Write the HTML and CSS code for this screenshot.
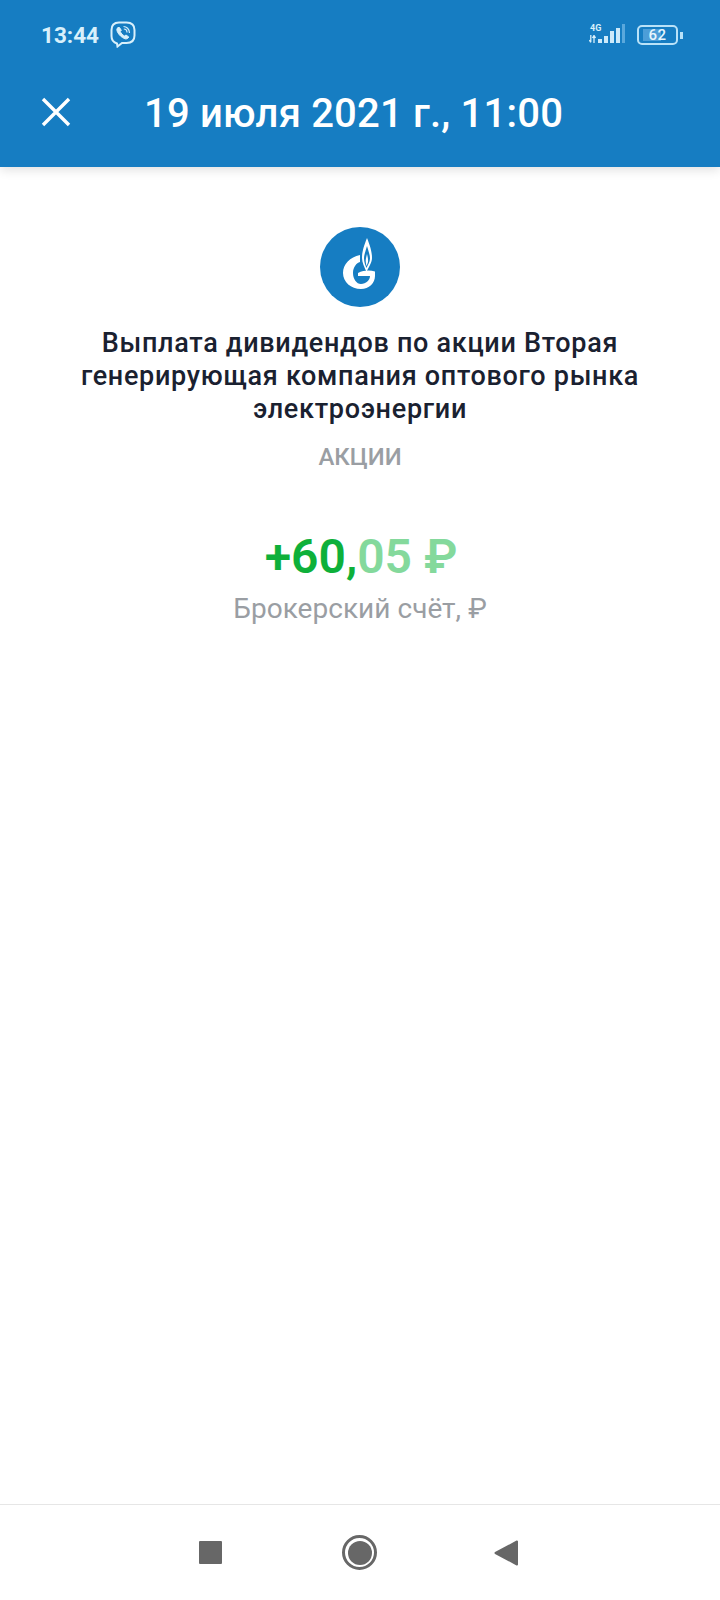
FILE: index.html
```html
<!DOCTYPE html>
<html>
  <head>
    <title>Операция</title>
    <link rel="stylesheet" href="styles.css">
  </head>
  <body>
    <header class="header">
      <div class="status-bar">
        <div class="status-left">
          <span class="time">13:44</span>
          <svg class="viber" width="26" height="27" viewBox="0 0 26 27" fill="none" stroke="#d8f0fb" stroke-width="2">
            <path d="M7 22.500C3.500 21.500 1.500 19.500 1.500 15V9C1.500 4 4.500 1.500 9 1.500H16.500C21.500 1.500 24.500 4 24.500 9V14.500C24.500 19.500 21.500 22 16.500 22H12L7.500 25.500Z"/>
            <path d="M8 6.500C6.500 7.500 6.500 9 7.500 11C9 14 11.500 16.500 15 17.800C16.500 18.300 18 17.500 18.800 16L16 14L14.500 15C12.500 14 11 12.300 10.300 10.500L11.300 9.300L9.500 6.500Z" fill="#d8f0fb" stroke-width="1"/>
            <path d="M13.500 5.500C16.500 5.500 19.500 8 19.500 12M13.800 8C15.500 8 17 9.500 17 11.500" stroke-width="1.200"/>
          </svg>
        </div>
        <div class="status-right">
          <div class="network">
            <span class="net-label">4G</span>
            <svg class="net-arrows" width="7" height="8" viewBox="0 0 7 8" fill="none" stroke="#d8f0fb" stroke-width="1.300">
              <path d="M1.800 0V7M0.300 5L1.800 7.500M5 8V1M3.500 3L5 0.500L6.500 3"/>
            </svg>
            <div class="bars">
              <span class="bar bar-1"></span>
              <span class="bar bar-2"></span>
              <span class="bar bar-3"></span>
              <span class="bar bar-4"></span>
              <span class="bar bar-5"></span>
            </div>
          </div>
          <div class="battery">
            <div class="battery-body">
              <span class="battery-fill"></span>
              <span class="battery-level">62</span>
            </div>
            <span class="battery-cap"></span>
          </div>
        </div>
      </div>
      <div class="toolbar">
        <svg class="close" width="30" height="30" viewBox="0 0 30 30" stroke="#fff" stroke-width="3.400">
          <path d="M2 2L28 28M28 2L2 28"/>
        </svg>
        <h1 class="title">19 июля 2021 г., 11:00</h1>
      </div>
    </header>

    <main class="content">
      <svg class="logo" width="80" height="80" viewBox="0 0 80 80">
        <circle cx="40" cy="40" r="40" fill="#167dc2"/>
        <path d="M47 11C43.500 20 42 25 42 31C42 36 44.500 40 46.500 45C48.500 40 52 36 52 31C52 25 50.500 20 47 11Z" fill="#fff"/>
        <path d="M47 19C45.300 25 44 28 44 31.500C44 35 45.300 38 46.500 41C47.700 38 50 35 50 31.500C50 28 48.700 25 47 19Z" fill="#167dc2"/>
        <path d="M47 27C46 31 45.500 33 45.800 35C46 37 46.300 38 46.600 39C47 38 47.500 36.500 48 35C48.300 33 48 31 47 27Z" fill="#fff"/>
        <path d="M40 28C30 30 23 37 23 46C23 55 31 62 41 62C49 62 55 56 55 49V44.500C50 43 44 43 38 46L38 49H50C50 53 46 57 41 57C36.500 57 33 52 33 46C33 40 36.500 36 40 35Z" fill="#fff"/>
      </svg>
      <h2 class="operation">Выплата дивидендов по акции Вторая генерирующая компания оптового рынка электроэнергии</h2>
      <p class="category">АКЦИИ</p>
      <p class="amount">+60,<span class="amount-light">05 ₽</span></p>
      <p class="account">Брокерский счёт, ₽</p>
    </main>

    <nav class="nav-bar">
      <span class="nav-square"></span>
      <span class="nav-home"><span class="nav-home-dot"></span></span>
      <svg width="24" height="26" viewBox="0 0 24 26" fill="#676767" stroke="#676767" stroke-width="2" stroke-linejoin="round">
        <path d="M23 1.500V24.500L1.500 13Z"/>
      </svg>
    </nav>
  </body>
</html>
```

FILE: styles.css
```css
* {
  box-sizing: border-box;
}

html,
body {
  height: 100%;
}

body {
  margin: 0;
  display: flex;
  flex-direction: column;
  font-family: Roboto, "Liberation Sans", sans-serif;
  background-color: #fff;
}

h1,
h2,
p {
  margin: 0;
}

.header {
  height: 167px;
  padding: 0 37px 0 41px;
  background-color: #167dc2;
  box-shadow: 0 3px 10px rgba(0, 0, 0, 0.12);
}

.status-bar {
  height: 70px;
  padding-top: 19px;
  display: flex;
  justify-content: space-between;
}

.status-left {
  display: flex;
  align-items: flex-start;
  gap: 11px;
}

.time {
  font-size: 22.5px;
  line-height: 32px;
  font-weight: 700;
  color: #d8f0fb;
}

.viber {
  margin-top: 2px;
}

.status-right {
  display: flex;
  gap: 12px;
}

.network {
  display: grid;
  grid-template-columns: 9px auto;
  grid-template-rows: 10px 9px;
  width: 36px;
  margin-top: 5px;
}

.net-label {
  grid-column: 1 / 3;
  grid-row: 1;
  margin-left: 1px;
  font-size: 9px;
  line-height: 9px;
  font-weight: 700;
  color: #d8f0fb;
}

.net-arrows {
  grid-column: 1;
  grid-row: 2;
  align-self: end;
}

.bars {
  grid-column: 2;
  grid-row: 1 / 3;
  display: flex;
  align-items: flex-end;
  gap: 2px;
}

.bar {
  width: 4px;
  background-color: #cdeafa;
}

.bar-1 {
  height: 4px;
}

.bar-2 {
  height: 7px;
}

.bar-3 {
  height: 12px;
}

.bar-4 {
  height: 15px;
}

.bar-5 {
  height: 19px;
  width: 3px;
  background-color: #5aa8dc;
}

.battery {
  display: flex;
  align-items: center;
  height: 20px;
  margin-top: 6px;
}

.battery-body {
  position: relative;
  width: 41px;
  height: 20px;
  border: 2px solid #b9e2f8;
  border-radius: 5px;
  display: flex;
  align-items: center;
  justify-content: center;
}

.battery-fill {
  position: absolute;
  left: 4px;
  top: 2px;
  bottom: 2px;
  width: 18px;
  background-color: #4c9ed8;
}

.battery-level {
  position: relative;
  font-size: 15px;
  font-weight: 500;
  letter-spacing: 0.5px;
  color: #e6f5fd;
}

.battery-cap {
  width: 3px;
  height: 7px;
  margin-left: 2px;
  background-color: #b9e2f8;
}

.toolbar {
  display: flex;
  align-items: center;
  height: 66px;
  margin-top: 9px;
}

.close {
  flex-shrink: 0;
}

.title {
  margin-left: 73px;
  margin-top: 4px;
  font-size: 40px;
  line-height: 46px;
  font-weight: 500;
  letter-spacing: 0.2px;
  color: #fff;
  white-space: nowrap;
}

.content {
  flex: 1;
  padding: 60px 40px 0;
  display: flex;
  flex-direction: column;
  align-items: center;
  text-align: center;
}

.logo {
  margin-bottom: 20px;
}

.operation {
  font-size: 27px;
  line-height: 33px;
  font-weight: 500;
  letter-spacing: 0.7px;
  color: #1a2130;
}

.category {
  margin-top: 16px;
  font-size: 24px;
  line-height: 30px;
  font-weight: 500;
  color: #9a9ea3;
}

.amount {
  margin-top: 55px;
  margin-left: 2px;
  font-size: 48px;
  line-height: 60px;
  font-weight: 600;
  color: #0eb03a;
}

.amount-light {
  color: #84d99c;
}

.account {
  margin-top: 4px;
  font-size: 28px;
  line-height: 36px;
  letter-spacing: 0.03px;
  color: #9a9ea3;
}

.nav-bar {
  height: 96px;
  padding: 0 202px 0 199px;
  border-top: 1px solid #e6e6e6;
  display: flex;
  align-items: center;
  justify-content: space-between;
}

.nav-square {
  width: 23px;
  height: 23px;
  border-radius: 1px;
  background-color: #676767;
}

.nav-home {
  width: 35px;
  height: 35px;
  margin-left: 3px;
  border: 3px solid #676767;
  border-radius: 50%;
  display: flex;
  align-items: center;
  justify-content: center;
}

.nav-home-dot {
  width: 24px;
  height: 24px;
  border-radius: 50%;
  background-color: #676767;
}
```
